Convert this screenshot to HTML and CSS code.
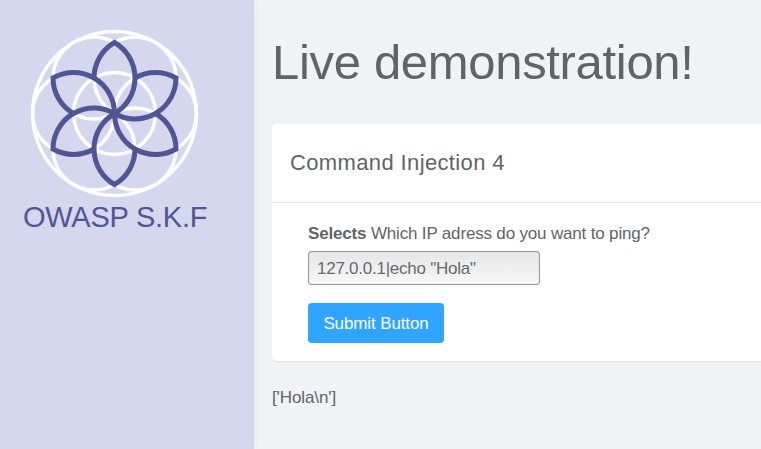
FILE: index.html
```html
<!DOCTYPE html>
<html lang="en">
<head>
<meta charset="utf-8">
<title>OWASP S.K.F</title>
<link rel="stylesheet" href="styles.css">
</head>
<body>
<div class="layout">
  <aside class="sidebar">
    <svg class="logo" viewBox="-84 -84 168 168" aria-hidden="true">
      <defs>
        <path id="petal" d="M0 0A41 41 0 0 0 0 -71A41 41 0 0 0 -20.5 -35.5"/>
      </defs>
      <g class="rings">
        <circle r="82"/>
        <circle r="41"/>
        <circle cx="41" r="41"/>
        <circle cx="-41" r="41"/>
        <circle cx="20.5" cy="-35.5" r="41"/>
        <circle cx="-20.5" cy="-35.5" r="41"/>
        <circle cx="20.5" cy="35.5" r="41"/>
        <circle cx="-20.5" cy="35.5" r="41"/>
      </g>
      <g class="petals">
        <use href="#petal"/>
        <use href="#petal" transform="rotate(60)"/>
        <use href="#petal" transform="rotate(120)"/>
        <use href="#petal" transform="rotate(180)"/>
        <use href="#petal" transform="rotate(240)"/>
        <use href="#petal" transform="rotate(300)"/>
      </g>
    </svg>
    <div class="brand">OWASP S.K.F</div>
  </aside>
  <main class="content">
    <h1 class="title">Live demonstration!</h1>
    <section class="card">
      <h2 class="card-header">Command Injection 4</h2>
      <form class="card-body">
        <label class="label" for="ip"><strong>Selects</strong> Which IP adress do you want to ping?</label>
        <input class="field" id="ip" type="text" value='127.0.0.1|echo "Hola"'>
        <button class="submit" type="button">Submit Button</button>
      </form>
    </section>
    <p class="result">['Hola\n']</p>
  </main>
</div>
</body>
</html>
```
FILE: styles.css
```css
* {
  box-sizing: border-box;
}

body {
  margin: 0;
  overflow: hidden;
  background: #eff3f6;
  color: #5f6468;
  font-family: "Liberation Sans", Arial, sans-serif;
  font-size: 17px;
}

.layout {
  display: flex;
  height: 449px;
}

.sidebar {
  flex: 0 0 254px;
  padding: 29px 0 0 23px;
  background: #d5d7ee;
  box-shadow: inset -1px 0 #d0d3e9, 0 0 10px rgba(0, 0, 0, 0.05);
}

.logo {
  display: block;
  width: 168px;
  height: 168px;
  margin-left: 7px;
  overflow: visible;
}

.rings {
  fill: none;
  stroke: #fff;
  stroke-width: 3.4;
  transform: translate(0.5px, 0.5px);
}

.petals {
  fill: none;
  stroke: #505596;
  stroke-width: 5;
  transform: translate(0.5px, 0.5px);
}

.brand {
  margin-top: 3px;
  color: #505596;
  font-size: 29px;
  letter-spacing: -0.25px;
  line-height: 34px;
  white-space: nowrap;
}

.content {
  flex: 1 1 0;
  min-width: 0;
  padding: 34px 0 0 18px;
}

.title {
  margin: 0 0 34px;
  color: #606467;
  font-size: 49px;
  font-weight: 400;
  letter-spacing: -0.32px;
  line-height: 56px;
  white-space: nowrap;
}

.card {
  height: 237px;
  background: #fff;
  border-radius: 5px 0 0 5px;
  box-shadow: 0 1px 1px rgba(0, 0, 0, 0.06);
}

.card-header {
  height: 79px;
  margin: 0;
  padding-left: 18px;
  border-bottom: 1px solid #e9ebec;
  font-size: 22px;
  font-weight: 400;
  letter-spacing: 0.37px;
  line-height: 78px;
}

.card-body {
  display: flex;
  flex-direction: column;
  align-items: flex-start;
  padding: 20px 36px 0;
}

.label {
  letter-spacing: -0.17px;
  line-height: 22px;
}

.field {
  width: 232px;
  height: 34px;
  margin: 6px 0 18px;
  padding: 2px 8px 0;
  border: 1px solid #999;
  border-radius: 3px;
  background: linear-gradient(#e6e6e6, #f7f7f7);
  box-shadow: inset 0 0 1px rgba(0, 0, 0, 0.3);
  color: #666a6d;
  font: inherit;
  letter-spacing: -0.25px;
}

.submit {
  width: 136px;
  height: 40px;
  padding: 2px 0 0;
  border: 0;
  border-radius: 4px;
  background: #30a5ff;
  color: #fff;
  font: inherit;
  letter-spacing: -0.12px;
}

.result {
  margin: 26px 0 0;
  letter-spacing: -0.1px;
  line-height: 22px;
}
```
